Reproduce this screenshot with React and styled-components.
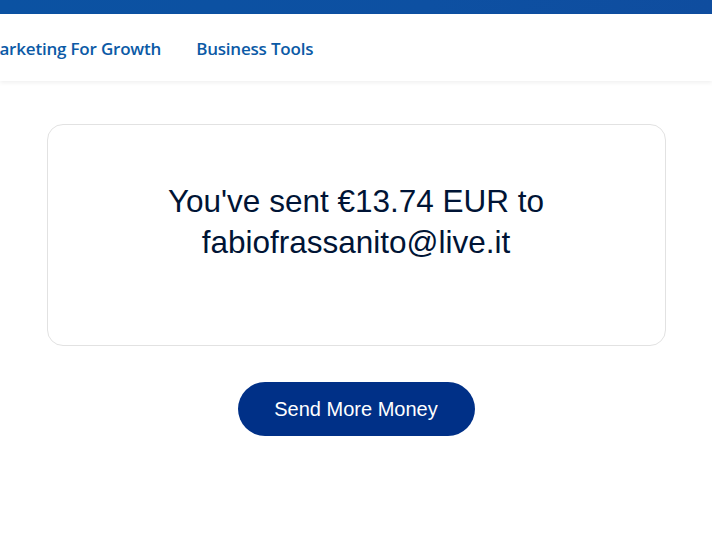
import React from 'react';
import styled, { createGlobalStyle } from 'styled-components';

const GlobalStyle = createGlobalStyle`
  html, body {
    margin: 0;
    padding: 0;
    background: #ffffff;
  }
  body {
    font-family: "Liberation Sans", Arial, sans-serif;
    overflow: hidden;
  }
`;

const Page = styled.div`
  width: 712px;
  height: 546px;
  overflow: hidden;
  display: flex;
  flex-direction: column;
`;

const TopBar = styled.div`
  height: 14px;
  background: linear-gradient(90deg, #0b52a2 0%, #0d50a2 60%, #0f4d9f 100%);
`;

const Nav = styled.nav`
  height: 67px;
  background: #ffffff;
  box-shadow: 0 2px 4px rgba(0, 0, 0, 0.06);
  display: flex;
  align-items: center;
  overflow: hidden;
`;

const NavList = styled.ul`
  list-style: none;
  margin: 1px 0 0 ${({ offset }) => offset}px;
  padding: 0;
  display: flex;
  gap: 35px;
  white-space: nowrap;
`;

const NavItem = styled.li`
  font-family: "Open Sans", sans-serif;
  font-size: 17px;
  font-weight: 600;
  color: #0b5aa6;
  letter-spacing: -0.2px;
`;

const Main = styled.main`
  flex: 1;
  display: flex;
  flex-direction: column;
  align-items: center;
  padding-top: 43px;
`;

const Card = styled.section`
  box-sizing: border-box;
  width: 619px;
  height: 222px;
  border: 1px solid #e2e2e2;
  border-radius: 16px;
  display: flex;
  align-items: flex-start;
  justify-content: center;
  padding-top: 56px;
`;

const Message = styled.h1`
  margin: 0;
  font-family: "Liberation Sans", Arial, sans-serif;
  font-weight: 400;
  font-size: 31.5px;
  line-height: 41px;
  color: #001435;
  text-align: center;
`;

const PrimaryButton = styled.button`
  margin-top: 36px;
  width: 237px;
  height: 54px;
  border: none;
  border-radius: 27px;
  background: #003087;
  color: #ffffff;
  font-family: "Liberation Sans", Arial, sans-serif;
  font-size: 20px;
  cursor: pointer;
`;

const App = () => (
  <Page>
    <GlobalStyle />
    <TopBar />
    <Nav>
      <NavList offset={-16}>
        <NavItem>Marketing For Growth</NavItem>
        <NavItem>Business Tools</NavItem>
      </NavList>
    </Nav>
    <Main>
      <Card>
        <Message>
          You've sent €13.74 EUR to
          <br />
          fabiofrassanito@live.it
        </Message>
      </Card>
      <PrimaryButton>Send More Money</PrimaryButton>
    </Main>
  </Page>
);

export default App;
